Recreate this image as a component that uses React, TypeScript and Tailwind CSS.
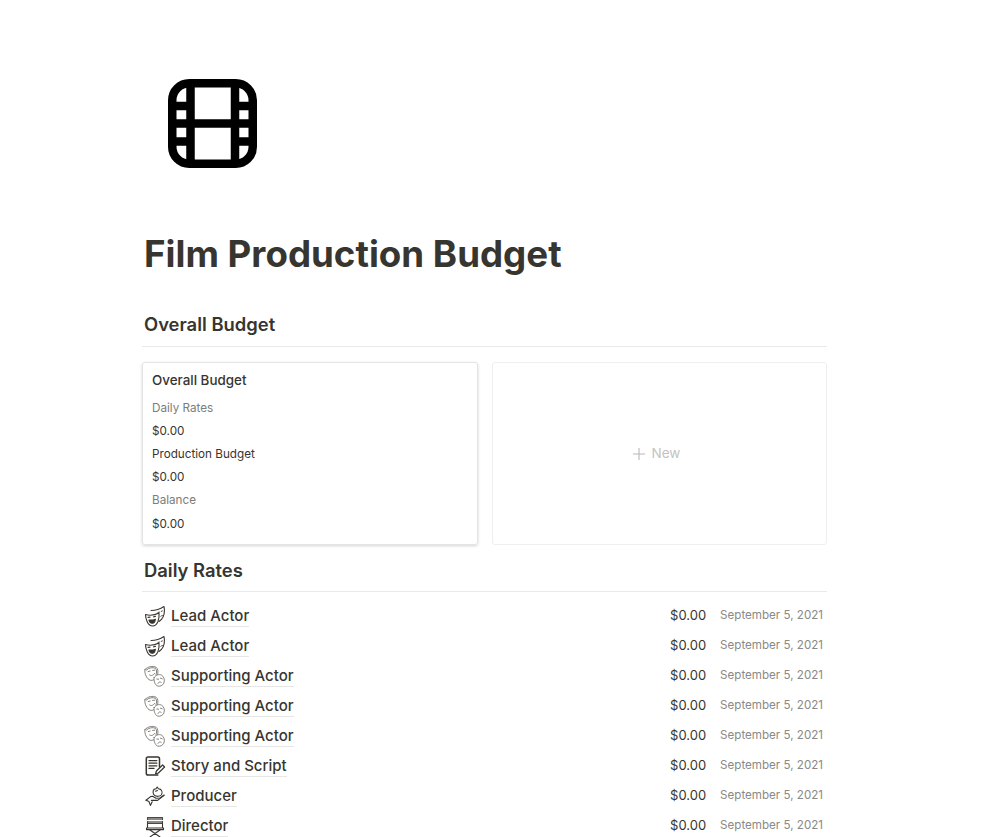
const F = "font-['Inter','Liberation_Sans',sans-serif]";

function FilmIcon() {
  return (
    <svg width="89" height="89" viewBox="0 0 89 89" className="block">
      <rect x="4.25" y="4.25" width="80.5" height="80.5" rx="17" fill="none" stroke="#000" strokeWidth="8.5" />
      <path d="M22.5 4V85M67 4V85M22 44.5H67M4 27H22M4 62.5H22M67 27H85M67 62.5H85M4 44.5H22M67 44.5H85" fill="none" stroke="#000" strokeWidth="8.5" />
    </svg>
  );
}

function MaskDark() {
  return (
    <svg width="22" height="22" viewBox="0 0 22 22" fill="none" stroke="#37352f" strokeWidth="1.1" strokeLinejoin="round" strokeLinecap="round">
      <path d="M7 5.5C11 5.5 16 4.2 20 1.5C21 7 20.2 13 15 16.5" />
      <path d="M1.5 9.5C5 10.5 11 10 15 8C15.6 13 14 21 8.5 21C4 21 1.5 14 1.5 9.5Z" fill="#fff" />
      <path d="M5 15C7 15.3 9.6 15 11.4 14.2C11 17 9.4 18.4 8 18.2C6.4 18 5.4 16.6 5 15Z" fill="#37352f" />
      <path d="M4 12.4L6 12.1M9.6 11.9L11.6 11.3" />
      <path d="M14 7.4L15.4 7.1M17.2 6.4L18.4 5.9M16.8 11.2C17.4 10.8 18 10.5 18.4 10.5" strokeWidth="0.9" />
    </svg>
  );
}

function MaskLight() {
  return (
    <svg width="22" height="22" viewBox="0 0 22 22" fill="none" stroke="#77756f" strokeWidth="0.9" strokeLinejoin="round" strokeLinecap="round">
      <path d="M1 4.5C3.8 1.4 9 0.6 12 2.2C14.2 3.6 14.4 7.4 13.2 10.6C12 13.8 8.8 16 6.2 15.2C3 14.2 0 8.6 1 4.5Z" fill="#fff" />
      <path d="M2.4 5C4.8 2.8 8.8 2 11.2 3.2C12.8 4.4 13 7.2 12 10" />
      <path d="M4.2 6.6L6.2 6M8.6 5.4L10.6 5.2M5.6 10C7 11.2 9.2 10.6 10.6 8.4" />
      <path d="M10.2 12.4C12 10 15 8.8 17.6 10.2C20.2 11.6 21 15.4 19.8 18.2C18.8 20.4 16 21.8 13.6 21C11 20.2 9.4 15.4 10.2 12.4Z" fill="#fff" />
      <path d="M12.8 14L14.6 14.2M16.4 13.2L18.2 13.8M14 18.4C14.8 16.8 16 16.4 17.2 17.4" />
    </svg>
  );
}

function ScriptIcon() {
  return (
    <svg width="22" height="22" viewBox="0 0 22 22" fill="none" stroke="#37352f" strokeLinecap="round" strokeLinejoin="round">
      <path d="M15.5 12V3.8C15.5 2.8 14.8 2 13.8 2H4C3 2 2.3 2.8 2.3 3.8V18.2C2.3 19.2 3 20 4 20H13.8" strokeWidth="1.5" />
      <path d="M5 5.6H12.8M5 8.2H12.8M5 10.8H12.8M5 13.4H10" strokeWidth="1.3" />
      <path d="M11.6 18.8L12.4 16L18.6 10L20.6 12L14.4 18Z" fill="#fff" strokeWidth="1.2" />
    </svg>
  );
}

function ProducerIcon() {
  return (
    <svg width="22" height="22" viewBox="0 0 22 22" fill="none" stroke="#37352f" strokeWidth="1.1" strokeLinecap="round" strokeLinejoin="round">
      <path d="M10 4.4L12 3.8L13.2 2L14.4 3.8L16.6 4.4C18.2 5.8 18.4 8.4 17.2 10C15.8 11.6 12.4 11.8 10.6 10.4C8.8 9 8.6 6 10 4.4Z" />
      <path d="M2 15.2L6.6 11.6L8.6 11.2L12 13.2L16 13L20 10.2" />
      <path d="M7.4 15.4H13.6L20 10.2" />
      <path d="M2 15.2L5 16.6L6.4 20.4L8.2 16.8" />
      <path d="M11.6 6.2L13.4 5.4" />
    </svg>
  );
}

function DirectorIcon() {
  return (
    <svg width="22" height="22" viewBox="0 0 22 22" fill="none" stroke="#37352f" strokeWidth="1.1" strokeLinecap="round" strokeLinejoin="round">
      <rect x="3.5" y="2.5" width="15" height="6" fill="#8a8985" stroke="#4a4843" />
      <path d="M3.5 5.5H18.5" stroke="#fff" strokeWidth="1.2" />
      <path d="M3.5 8.5V13M18.5 8.5V13" />
      <path d="M2.5 13H19.5V14.6H2.5Z" fill="#fff" />
      <path d="M6 15L16 22M16 15L6 22" />
    </svg>
  );
}

const rows = [
  ["Lead Actor", MaskDark],
  ["Lead Actor", MaskDark],
  ["Supporting Actor", MaskLight],
  ["Supporting Actor", MaskLight],
  ["Supporting Actor", MaskLight],
  ["Story and Script", ScriptIcon],
  ["Producer", ProducerIcon],
  ["Director", DirectorIcon],
] as const;

function Heading({ children, top }: { children: string; top: string }) {
  return (
    <div className={`border-b border-[#e9e9e7] h-[37px] pl-0.5 ${top}`}>
      <h2 className="text-[18.4px] leading-[26px] font-semibold text-[#37352f]">{children}</h2>
    </div>
  );
}

export default function App() {
  return (
    <div className={`${F} w-[1005px] h-[837px] overflow-hidden bg-white text-[#37352f] pt-[79px] pl-[142px]`}>
      <div className="w-[685px]">
        <div className="pl-[26px] h-[89px]">
          <FilmIcon />
        </div>
        <h1 className="mt-[64px] pl-0.5 text-[36.7px] leading-[44px] font-bold text-[#37352f] h-[44px] whitespace-nowrap">
          Film Production Budget
        </h1>
        <div className="mt-[34px]">
          <Heading top="pt-px">Overall Budget</Heading>
        </div>
        <div className="mt-[15px] flex gap-[14px] h-[183px]">
          <div className="w-[336px] rounded-[3px] border border-[#e4e4e2] shadow-[0_1px_3px_rgba(15,15,15,0.18)] px-[9px] pt-[7px]">
            <div className="text-[13.4px] leading-[20px] font-medium mb-[6.5px]">Overall Budget</div>
            <div className="text-[11.7px] leading-[23.2px] text-[#7d7c78]">Daily Rates</div>
            <div className="text-[11.7px] leading-[23.2px]">$0.00</div>
            <div className="text-[11.7px] leading-[23.2px]">Production Budget</div>
            <div className="text-[11.7px] leading-[23.2px]">$0.00</div>
            <div className="text-[11.7px] leading-[23.2px] text-[#7d7c78]">Balance</div>
            <div className="text-[11.7px] leading-[23.2px]">$0.00</div>
          </div>
          <div className="flex-1 rounded-[3px] border border-[#efefee] flex items-center justify-center pr-[7px] text-[#c4c3c0] text-[13.5px] gap-[6px]">
            <svg width="14" height="14" viewBox="0 0 14 14" stroke="#b9b8b5" strokeWidth="1.1"><path d="M7 1V13M1 7H13" /></svg>
            <span>New</span>
          </div>
        </div>
        <div className="mt-[10px]">
          <Heading top="pt-[2px]">Daily Rates</Heading>
        </div>
        <div className="mt-[9px]">
          {rows.map(([name, Icon], i) => (
            <div key={i} className="h-[30px] flex items-center pl-0.5 pr-1">
              <div className="w-[22px] h-[22px] shrink-0 mr-[5px]">
                <Icon />
              </div>
              <span className="text-[15px] leading-[20px] font-medium border-b border-[#e6e6e4] text-[#37352f]">{name}</span>
              <span className="ml-auto text-[13px] text-[#37352f]">$0.00</span>
              <span className="ml-[14px] text-[11.6px] text-[#8a8985]">September 5, 2021</span>
            </div>
          ))}
        </div>
      </div>
    </div>
  );
}
